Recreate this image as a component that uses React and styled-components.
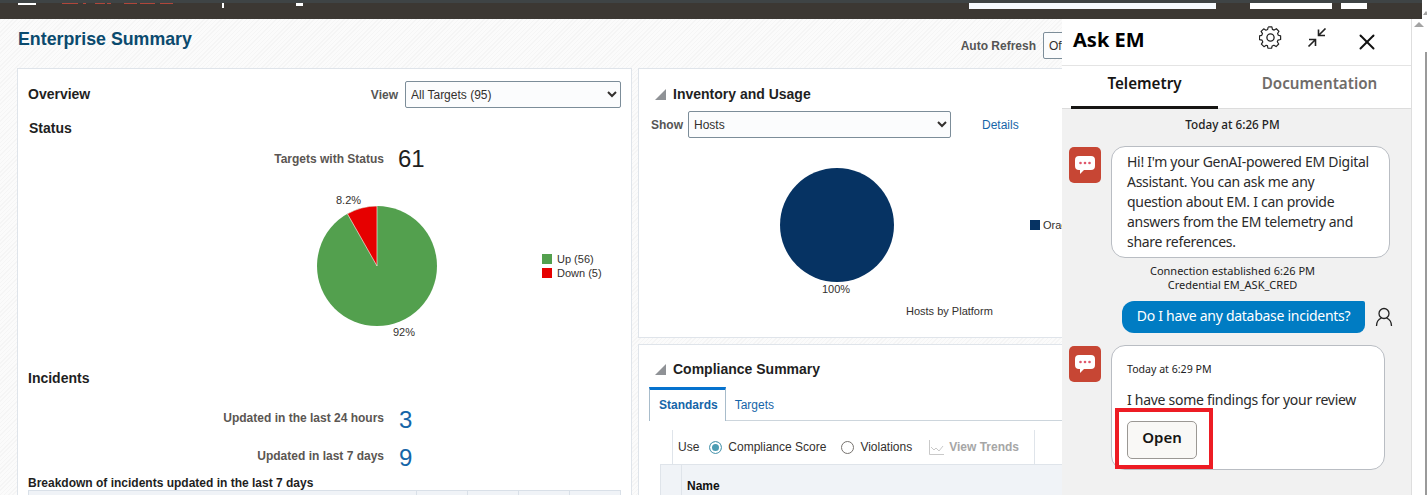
import React from 'react';
import styled, { createGlobalStyle } from 'styled-components';
import { X } from 'lucide-react';

const GlobalStyle = createGlobalStyle`
  html, body {
    margin: 0;
    padding: 0;
    overflow: hidden;
    background: #fff;
  }
  * { box-sizing: border-box; }
`;

const Page = styled.div`
  width: 1427px;
  height: 495px;
  overflow: hidden;
  font-family: "Liberation Sans", Arial, sans-serif;
  color: #33302e;
`;

const TopRow = styled.div`
  display: flex;
  height: 19px;
  overflow: hidden;
`;

const Header = styled.div`
  flex: 0 0 1422px;
  height: 19px;
  background: #3c3833;
  border-top: 3px solid #3f4445;
  display: flex;
  align-items: flex-start;
`;

const HeaderBar = styled.div`
  height: ${p => p.$h || 2}px;
  width: ${p => p.$w}px;
  margin-left: ${p => p.$ml}px;
  background: ${p => p.$color || '#fff'};
  flex-shrink: 0;
`;

const TopArrow = styled.span`
  display: block;
  flex-shrink: 0;
  width: 0;
  height: 0;
  margin: 11px 0 0 1px;
  border-left: 3px solid transparent;
  border-right: 3px solid transparent;
  border-bottom: 4px solid #a3a3a3;
`;

const Body = styled.div`
  display: flex;
  height: 476px;
`;

const Content = styled.div`
  width: 1062px;
  flex-shrink: 0;
  overflow: hidden;
  background: repeating-linear-gradient(135deg, #f5f5f5 0 1px, #fbfbfb 1px 3px);
`;

const TitleBar = styled.div`
  width: 1103px;
  height: 49px;
  padding-left: 18px;
  display: flex;
  align-items: flex-start;
`;

const PageTitle = styled.h1`
  flex: 1;
  margin: 10px 0 0;
  font-size: 17.8px;
  line-height: 21px;
  font-weight: 700;
  color: #0a4a6e;
`;

const RefreshLabel = styled.span`
  margin: 20px 7px 0 0;
  font-size: 12px;
  line-height: 14px;
  font-weight: 700;
  color: #555;
`;

const Select = styled.select`
  width: ${p => p.$w}px;
  height: ${p => p.$h || 27}px;
  flex-shrink: 0;
  padding: 0 0 0 1px;
  font-family: inherit;
  font-size: 12px;
  color: #33302e;
  background: #fbfcfd;
  border: 1px solid #7c8d99;
  border-radius: 2px;
`;

const RefreshSelect = styled(Select)`
  margin-top: 13px;
`;

const Panels = styled.div`
  display: grid;
  grid-template-columns: 615px 440px;
  column-gap: 6px;
  padding-left: 17px;
  align-items: start;
`;

const Card = styled.div`
  background: #fff;
  border: 1px solid #dfe4ea;
  overflow: hidden;
`;

const OverviewCard = styled(Card)`
  height: 440px;
  padding: 12px 10px 0;
`;

const RightColumn = styled.div`
  display: flex;
  flex-direction: column;
  gap: 6px;
`;

const InventoryCard = styled(Card)`
  height: 270px;
  padding: 17px 12px 0;
`;

const ComplianceCard = styled(Card)`
  height: 160px;
  padding: 16px 10px 0;
`;

const SpaceRow = styled.div`
  display: flex;
  align-items: center;
  justify-content: space-between;
`;

const HeadLabel = styled.span`
  padding-bottom: 2px;
  font-size: 14px;
  font-weight: 700;
  color: #1f1f1f;
`;

const ViewGroup = styled.div`
  display: flex;
  align-items: center;
  gap: 7px;
`;

const FieldLabel = styled.span`
  font-size: 12px;
  font-weight: 700;
  color: #555;
`;

const SectionHead = styled.h3`
  margin: ${p => p.$top}px 0 0;
  padding-left: ${p => p.$indent || 0}px;
  font-size: 14px;
  line-height: 16px;
  font-weight: 700;
  color: #1f1f1f;
`;

const Metric = styled.div`
  display: grid;
  grid-template-columns: 356px auto;
  grid-template-rows: ${p => p.$h}px;
  column-gap: 14px;
  align-items: center;
  height: ${p => p.$h}px;
  margin-top: ${p => p.$top}px;
`;

const MetricLabel = styled.span`
  font-size: 12px;
  font-weight: 700;
  color: #5b5652;
  text-align: right;
`;

const MetricValue = styled.span`
  font-size: 24px;
  line-height: 24px;
  color: ${p => p.$link ? '#1565a8' : '#1f1f1f'};
  padding: ${p => p.$link ? '4px 0 0 1px' : '0'};
`;

const ChartRow = styled.div`
  display: flex;
  align-items: flex-start;
  height: 150px;
  margin-top: 20px;
`;

const StatusPie = styled.svg`
  display: block;
  flex-shrink: 0;
  margin-left: 272px;
`;

const Legend = styled.ul`
  list-style: none;
  margin: 62px 0 0 82px;
  padding: 0;
  font-size: 11px;
  line-height: 14px;
`;

const LegendItem = styled.li`
  display: flex;
  align-items: center;
  gap: ${p => p.$gap || 5}px;
  color: #33302e;
`;

const Swatch = styled.i`
  display: block;
  width: 10px;
  height: 10px;
  background: ${p => p.$color};
`;

const BreakTitle = styled.div`
  margin-top: 7px;
  font-size: 12px;
  line-height: 14px;
  font-weight: 700;
  color: #1f1f1f;
`;

const BreakTable = styled.div`
  display: grid;
  grid-template-columns: 388px 51px 51px 51px 52px;
  height: 30px;
  background: #f0f3f7;
  border-top: 1px solid #d9e0e8;
`;

const BreakCell = styled.div`
  border-left: 1px solid #d9e0e8;
  &:last-child { border-right: 1px solid #d9e0e8; }
`;

const CollapseHead = styled.div`
  display: flex;
  align-items: center;
  gap: 7px;
  height: 16px;
  padding-left: ${p => p.$indent}px;
`;

const Triangle = styled.svg`
  display: block;
`;

const CollapseTitle = styled.h2`
  margin: 0;
  font-size: 14px;
  line-height: 16px;
  font-weight: 700;
  color: #1f1f1f;
`;

const ShowRow = styled.div`
  display: flex;
  align-items: center;
  margin-top: 9px;
`;

const ShowLabel = styled(FieldLabel)`
  width: 37px;
`;

const DetailsLink = styled.a`
  margin-left: 31px;
  font-size: 12px;
  color: #1565a8;
`;

const PlatformChart = styled.div`
  display: flex;
  align-items: flex-start;
  margin-top: 16px;
`;

const PlatformPie = styled.svg`
  display: block;
  flex-shrink: 0;
`;

const PlatformSide = styled.div`
  flex-shrink: 0;
  margin-left: 21px;
  padding-top: 64px;
`;

const OracleLegend = styled(LegendItem)`
  font-size: 11px;
  line-height: 14px;
  white-space: nowrap;
`;

const PlatformCaption = styled.div`
  margin: 72px 0 0 -124px;
  font-size: 11px;
  line-height: 14px;
  color: #33302e;
  white-space: nowrap;
`;

const TabRow = styled.div`
  display: flex;
  align-items: stretch;
  height: 34px;
  margin-top: 10px;
  border-bottom: 1px solid #ccd5dc;
`;

const PageTab = styled.div`
  display: flex;
  align-items: center;
  font-size: 12px;
  font-weight: ${p => p.$active ? 700 : 400};
  color: #1565a8;
  padding: ${p => p.$active ? '0 7px 1px 9px' : '2px 9px 0'};
  background: #fff;
  ${p => p.$active && `
    border-top: 3px solid #0572ce;
    border-left: 1px solid #a8bccb;
    border-right: 1px solid #a8bccb;
    margin-bottom: -1px;
  `}
`;

const TrendToolbar = styled.div`
  display: flex;
  align-items: center;
  width: 363px;
  height: 34px;
  margin: 9px 0 0 23px;
  padding-left: 5px;
  border-left: 1px solid #dfe4ea;
  border-right: 1px solid #dfe4ea;
  font-size: 12px;
`;

const RadioLabel = styled.span`
  margin-left: ${p => p.$ml}px;
`;

const Radio = styled.span`
  display: block;
  width: 13px;
  height: 13px;
  flex-shrink: 0;
  margin-left: ${p => p.$ml}px;
  border-radius: 50%;
  border: 1px solid ${p => p.$on ? '#5d9fb5' : '#77736f'};
  background: ${p => p.$on ? '#4b9cb3' : '#fff'};
  box-shadow: ${p => p.$on ? 'inset 0 0 0 2px #fff' : 'none'};
`;

const TrendIcon = styled.svg`
  display: block;
  flex-shrink: 0;
  margin-left: 17px;
`;

const TrendLabel = styled.span`
  margin-left: 5px;
  font-weight: 700;
  color: #a6a6a6;
`;

const NameHeader = styled.div`
  display: grid;
  grid-template-columns: 20px 1fr;
  height: 40px;
  margin-left: 11px;
  background: #f0f3f7;
  border-top: 1px solid #dfe4ea;
  border-left: 1px solid #dfe4ea;
`;

const NameCell = styled.div`
  grid-column: 2;
  padding: 14px 0 0 5px;
  border-left: 1px solid #dfe4ea;
  font-size: 12px;
  line-height: 15px;
  font-weight: 700;
  color: #111;
`;

const AskPanel = styled.aside`
  width: 349px;
  flex-shrink: 0;
  display: flex;
  flex-direction: column;
  background: #fff;
  font-family: "Noto Sans", "Open Sans", sans-serif;
  color: #1f1f1f;
`;

const AskHeader = styled.div`
  display: flex;
  align-items: flex-start;
  height: 47px;
  padding-left: 11px;
  border-bottom: 1px solid #e4e4e4;
`;

const AskTitle = styled.div`
  width: 186px;
  margin-top: 7px;
  font-size: 20px;
  line-height: 28px;
  font-weight: 700;
  color: #000;
`;

const HeadIcon = styled.svg`
  display: block;
  flex-shrink: 0;
  margin: ${p => p.$top}px 0 0 ${p => p.$ml}px;
`;

const CloseIcon = styled(X)`
  display: block;
  flex-shrink: 0;
  margin: 10px 0 0 27px;
`;

const AskTabs = styled.div`
  display: grid;
  height: 43px;
  padding-left: 9px;
  grid-template-columns: 147px 1fr;
  border-bottom: 1px solid #dcdcdc;
`;

const AskTab = styled.div`
  display: flex;
  align-items: center;
  justify-content: center;
  padding: 0 0 6px ${p => p.$active ? 0 : 10}px;
  font-size: 15.2px;
  font-weight: 600;
  color: ${p => p.$active ? '#161513' : '#6f6c69'};
  border-bottom: ${p => p.$active ? '3px solid #161513' : '3px solid transparent'};
  margin-bottom: -1px;
`;

const Chat = styled.div`
  flex: 1;
  background: #f1f1f1;
  padding: 8px 0 0 7px;
  overflow: hidden;
`;

const Stamp = styled.div`
  margin-right: 15px;
  font-size: 11.7px;
  line-height: 15px;
  font-weight: 500;
  text-align: center;
  color: #222;
`;

const BotRow = styled.div`
  display: flex;
  align-items: flex-start;
  gap: 10px;
  margin-top: ${p => p.$top}px;
`;

const BotAvatar = styled.div`
  width: 32px;
  height: 36px;
  margin-top: 1px;
  flex-shrink: 0;
  border-radius: 5px;
  background: #c74634;
  display: flex;
  align-items: center;
  justify-content: center;
`;

const Bubble = styled.div`
  width: ${p => p.$w}px;
  height: ${p => p.$h}px;
  padding: ${p => p.$pad};
  background: #fff;
  border: 1px solid #b9bdc3;
  border-radius: 14px;
  font-size: 14px;
  letter-spacing: -0.28px;
  line-height: 20px;
  color: #2b2b2b;
`;

const ConnectionNote = styled.div`
  margin: 6px 0 0 0;
  padding-right: 15px;
  font-size: 11px;
  line-height: 14px;
  text-align: center;
  color: #222;
`;

const UserRow = styled.div`
  display: flex;
  align-items: center;
  gap: 10px;
  margin: 9px 0 0 53px;
`;

const UserBubble = styled.div`
  width: 243px;
  height: 32px;
  padding-bottom: 3px;
  display: flex;
  align-items: center;
  justify-content: center;
  border-radius: 12px 2px 8px 12px;
  background: #007cc3;
  color: #fff;
  font-size: 14px;
  letter-spacing: -0.28px;
`;

const BubbleStamp = styled.div`
  font-size: 10.6px;
  line-height: 15px;
  letter-spacing: 0;
  color: #222;
`;

const BubbleText = styled.div`
  margin-top: 13px;
`;

const OpenWrap = styled.div`
  position: relative;
  width: 70px;
  margin-top: 11px;
`;

const OpenButton = styled.button`
  display: block;
  width: 70px;
  height: 38px;
  border: 1px solid #9b9894;
  border-radius: 5px;
  background: #f9f8f6;
  font-family: inherit;
  font-size: 15px;
  font-weight: 600;
  color: #161513;
  padding: 0 0 7px;
`;

const Highlight = styled.div`
  position: absolute;
  left: -12px;
  top: -13px;
  width: 98px;
  height: 61px;
  border: 4px solid #ed1c24;
  pointer-events: none;
`;

const PageScroll = styled.div`
  width: 16px;
  flex-shrink: 0;
  background: #fff;
  border-left: 1px solid #dedede;
  display: flex;
  flex-direction: column;
  align-items: flex-start;
  padding-top: 3px;
`;

const ScrollArrow = styled.span`
  display: block;
  width: 0;
  height: 0;
  margin-left: 2px;
  border-left: 5px solid transparent;
  border-right: 5px solid transparent;
  border-bottom: 5px solid #a3a3a3;
`;

const ScrollThumb = styled.div`
  flex: 1;
  align-self: flex-end;
  width: 2px;
  margin-top: 25px;
  background: #9a9a9a;
`;

function BotIcon() {
  return (
    <svg width="22" height="20" viewBox="0 0 22 20">
      <path d="M5 1h12a4 4 0 0 1 4 4v6a4 4 0 0 1-4 4H10l-4 4v-4H5a4 4 0 0 1-4-4V5a4 4 0 0 1 4-4z" fill="#fff" />
      <circle cx="6.5" cy="8" r="1.3" fill="#e0566a" />
      <circle cx="11" cy="8" r="1.3" fill="#e0566a" />
      <circle cx="15.5" cy="8" r="1.3" fill="#e0566a" />
    </svg>
  );
}

function CollapseMark() {
  return (
    <Triangle width="11" height="11" viewBox="0 0 11 11">
      <path d="M11 0v11H0z" fill="#8f9296" />
    </Triangle>
  );
}

export default function App() {
  return (
    <Page>
      <GlobalStyle />
      <TopRow>
        <Header>
          <HeaderBar $w={18} $ml={18} />
          <HeaderBar $w={16} $h={1} $ml={26} $color="#b0463a" />
          <HeaderBar $w={3} $h={1} $ml={5} $color="#b0463a" />
          <HeaderBar $w={10} $h={1} $ml={9} $color="#b0463a" />
          <HeaderBar $w={4} $h={1} $ml={2} $color="#b0463a" />
          <HeaderBar $w={13} $h={1} $ml={13} $color="#b0463a" />
          <HeaderBar $w={15} $h={1} $ml={3} $color="#b0463a" />
          <HeaderBar $w={13} $h={1} $ml={5} $color="#b0463a" />
          <HeaderBar $w={2} $h={5} $ml={49} />
          <HeaderBar $w={7} $h={3} $ml={72} />
          <HeaderBar $w={247} $h={6} $ml={666} $color="#f7fbff" />
          <HeaderBar $w={82} $h={6} $ml={34} />
          <HeaderBar $w={26} $h={6} $ml={9} />
        </Header>
        <TopArrow />
      </TopRow>
      <Body>
        <Content>
          <TitleBar>
            <PageTitle>Enterprise Summary</PageTitle>
            <RefreshLabel>Auto Refresh</RefreshLabel>
            <RefreshSelect $w={60} defaultValue="Off">
              <option>Off</option>
            </RefreshSelect>
          </TitleBar>
          <Panels>
            <OverviewCard>
              <SpaceRow>
                <HeadLabel>Overview</HeadLabel>
                <ViewGroup>
                  <FieldLabel>View</FieldLabel>
                  <Select $w={216} defaultValue="all">
                    <option value="all">All Targets (95)</option>
                  </Select>
                </ViewGroup>
              </SpaceRow>
              <SectionHead $top={12} $indent={1}>Status</SectionHead>
              <Metric $h={22} $top={12}>
                <MetricLabel>Targets with Status</MetricLabel>
                <MetricValue>61</MetricValue>
              </Metric>
              <ChartRow>
                <StatusPie width="160" height="150" viewBox="0 0 160 150">
                  <circle cx="77" cy="76" r="60" fill="#53a04e" />
                  <path d="M77 76L47.4 23.8A60 60 0 0 1 77 16z" fill="#e60000" stroke="#fff" strokeWidth="0.6" />
                  <text x="36" y="14" fontSize="11" fill="#33302e">8.2%</text>
                  <text x="93" y="146" fontSize="11" fill="#33302e">92%</text>
                </StatusPie>
                <Legend>
                  <LegendItem><Swatch $color="#53a04e" />Up (56)</LegendItem>
                  <LegendItem><Swatch $color="#e60000" />Down (5)</LegendItem>
                </Legend>
              </ChartRow>
              <SectionHead $top={30}>Incidents</SectionHead>
              <Metric $h={26} $top={19}>
                <MetricLabel>Updated in the last 24 hours</MetricLabel>
                <MetricValue $link>3</MetricValue>
              </Metric>
              <Metric $h={26} $top={12}>
                <MetricLabel>Updated in last 7 days</MetricLabel>
                <MetricValue $link>9</MetricValue>
              </Metric>
              <BreakTitle>Breakdown of incidents updated in the last 7 days</BreakTitle>
              <BreakTable>
                <BreakCell />
                <BreakCell />
                <BreakCell />
                <BreakCell />
                <BreakCell />
              </BreakTable>
            </OverviewCard>
            <RightColumn>
              <InventoryCard>
                <CollapseHead $indent={4}>
                  <CollapseMark />
                  <CollapseTitle>Inventory and Usage</CollapseTitle>
                </CollapseHead>
                <ShowRow>
                  <ShowLabel>Show</ShowLabel>
                  <Select $w={263} defaultValue="hosts">
                    <option value="hosts">Hosts</option>
                  </Select>
                  <DetailsLink>Details</DetailsLink>
                </ShowRow>
                <PlatformChart>
                  <PlatformPie width="358" height="150" viewBox="0 0 358 150">
                    <circle cx="186" cy="71" r="57" fill="#063363" />
                    <text x="185" y="139" fontSize="11" textAnchor="middle" fill="#33302e">100%</text>
                  </PlatformPie>
                  <PlatformSide>
                    <OracleLegend $gap={3}><Swatch $color="#063363" />Oracle Linux</OracleLegend>
                    <PlatformCaption>Hosts by Platform</PlatformCaption>
                  </PlatformSide>
                </PlatformChart>
              </InventoryCard>
              <ComplianceCard>
                <CollapseHead $indent={6}>
                  <CollapseMark />
                  <CollapseTitle>Compliance Summary</CollapseTitle>
                </CollapseHead>
                <TabRow>
                  <PageTab $active>Standards</PageTab>
                  <PageTab>Targets</PageTab>
                </TabRow>
                <TrendToolbar>
                  <span>Use</span>
                  <Radio $on $ml={10} />
                  <RadioLabel $ml={6}>Compliance Score</RadioLabel>
                  <Radio $ml={15} />
                  <RadioLabel $ml={6}>Violations</RadioLabel>
                  <TrendIcon width="15" height="15" viewBox="0 0 15 15">
                    <path d="M.5 0v14.5H15" fill="none" stroke="#c9c9c9" />
                    <path d="M2 7l3 3 2-2 3 3 4-5" fill="none" stroke="#c9c9c9" />
                  </TrendIcon>
                  <TrendLabel>View Trends</TrendLabel>
                </TrendToolbar>
                <NameHeader>
                  <NameCell>Name</NameCell>
                </NameHeader>
              </ComplianceCard>
            </RightColumn>
          </Panels>
        </Content>
        <AskPanel>
          <AskHeader>
            <AskTitle>Ask EM</AskTitle>
            <HeadIcon $top={7} $ml={0} width="24" height="24" viewBox="0 0 24 24" fill="none" stroke="#222" strokeWidth="1.3" strokeLinejoin="round">
              <path d="M10 2.5h4l.6 2.8 1.9.8 2.4-1.5 2.8 2.8-1.5 2.4.8 1.9 2.5.6v4l-2.8.6-.8 1.9 1.5 2.4-2.8 2.8-2.4-1.5-1.9.8-.6 2.5h-4l-.6-2.8" transform="translate(0 -1.5) scale(.92)" />
              <path d="M10 2.8l-.6 2.6-1.9.8-2.4-1.5-2.8 2.8 1.5 2.4-.8 1.9-2.5.6v4l2.8.6.8 1.9-1.5 2.4 2.8 2.8 2.4-1.5 1.9.8" transform="translate(0 -1.5) scale(.92)" />
              <circle cx="11.5" cy="11.5" r="3.6" />
            </HeadIcon>
            <HeadIcon $top={9} $ml={24} width="20" height="20" viewBox="0 0 20 20" fill="none" stroke="#222" strokeWidth="1.6">
              <path d="M18.5 .5l-7 7M11.5 1.5v6h6.5" />
              <path d="M1.5 18.5l7-7M8.5 18v-6.5H2" />
            </HeadIcon>
            <CloseIcon size={26} color="#111" strokeWidth={1.8} />
          </AskHeader>
          <AskTabs>
            <AskTab $active>Telemetry</AskTab>
            <AskTab>Documentation</AskTab>
          </AskTabs>
          <Chat>
            <Stamp>Today at 6:26 PM</Stamp>
            <BotRow $top={14}>
              <BotAvatar><BotIcon /></BotAvatar>
              <Bubble $w={279} $h={112} $pad="5px 10px 0 15px">
                Hi! I'm your GenAI-powered EM Digital<br />
                Assistant. You can ask me any<br />
                question about EM. I can provide<br />
                answers from the EM telemetry and<br />
                share references.
              </Bubble>
            </BotRow>
            <ConnectionNote>
              Connection established 6:26 PM<br />Credential EM_ASK_CRED
            </ConnectionNote>
            <UserRow>
              <UserBubble>Do I have any database incidents?</UserBubble>
              <svg width="18" height="20" viewBox="0 0 18 20" fill="none" stroke="#222" strokeWidth="1.3">
                <circle cx="9" cy="6.5" r="5" />
                <path d="M1.5 19c0-4 2.5-7 5-8M16.5 19c0-4-2.5-7-5-8" />
              </svg>
            </UserRow>
            <BotRow $top={12}>
              <BotAvatar><BotIcon /></BotAvatar>
              <Bubble $w={274} $h={125} $pad="16px 10px 0 15px">
                <BubbleStamp>Today at 6:29 PM</BubbleStamp>
                <BubbleText>I have some findings for your review</BubbleText>
                <OpenWrap>
                  <OpenButton>Open</OpenButton>
                  <Highlight />
                </OpenWrap>
              </Bubble>
            </BotRow>
          </Chat>
        </AskPanel>
        <PageScroll>
          <ScrollArrow />
          <ScrollThumb />
        </PageScroll>
      </Body>
    </Page>
  );
}
